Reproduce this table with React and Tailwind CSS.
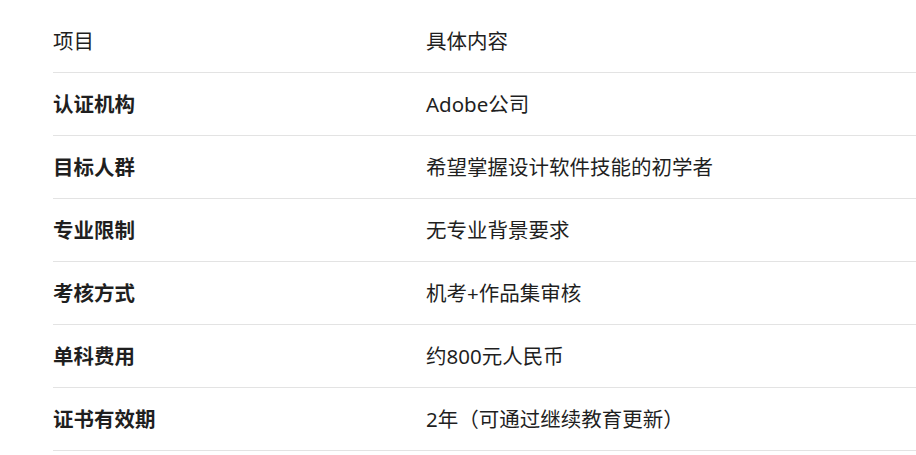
import React from "react";

const rows = [
  ["认证机构", "Adobe公司"],
  ["目标人群", "希望掌握设计软件技能的初学者"],
  ["专业限制", "无专业背景要求"],
  ["考核方式", "机考+作品集审核"],
  ["单科费用", "约800元人民币"],
  ["证书有效期", "2年（可通过继续教育更新）"],
];

function App() {
  return (
    <div
      className="w-[916px] h-[455px] overflow-hidden bg-white text-[#1f1f1f]"
      style={{ fontFamily: '"Noto Sans", "Noto Sans CJK SC", sans-serif' }}
    >
      <div className="ml-[53px] mt-[10px] w-[900px]">
        {/* header */}
        <div className="flex h-[63px] items-center border-b border-[#e3e3e3] text-[20.5px]">
          <div className="w-[373px]">项目</div>
          <div>具体内容</div>
        </div>
        {rows.map(([k, v]) => (
          <div
            key={k}
            className="flex h-[63px] items-center border-b border-[#e3e3e3] text-[20.5px]"
          >
            <div className="w-[373px] font-bold">{k}</div>
            <div>{v}</div>
          </div>
        ))}
      </div>
    </div>
  );
}

export default App;
